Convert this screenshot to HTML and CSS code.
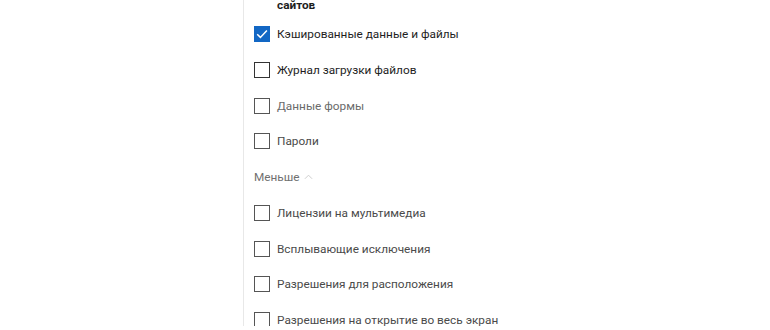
FILE: index.html
```html
<!DOCTYPE html>
<html>
<head>
  <meta charset="UTF-8" />
  <title>Очистить данные браузера</title>
  <link rel="stylesheet" href="styles.css">
</head>
<body>
  <div class="panel">
    <div class="wrap-tail">сайтов</div>

    <label class="option strong">
      <span class="box checked">
        <svg viewBox="0 0 16 16" width="16" height="16"><path d="M3.2 8.3 L6.4 11.4 L12.9 4.6" fill="none" stroke="#fff" stroke-width="1.5"/></svg>
      </span>
      Кэшированные данные и файлы
    </label>
    <label class="option strong">
      <span class="box dark"></span>
      Журнал загрузки файлов
    </label>
    <label class="option faded">
      <span class="box"></span>
      Данные формы
    </label>
    <label class="option">
      <span class="box"></span>
      Пароли
    </label>

    <div class="toggle">
      Меньше
      <svg viewBox="0 0 10 6" width="9" height="6"><path d="M1 5 L5 1 L9 5" fill="none" stroke="#c8c8c8" stroke-width="1"/></svg>
    </div>

    <label class="option">
      <span class="box"></span>
      Лицензии на мультимедиа
    </label>
    <label class="option">
      <span class="box"></span>
      Всплывающие исключения
    </label>
    <label class="option">
      <span class="box"></span>
      Разрешения для расположения
    </label>
    <label class="option">
      <span class="box"></span>
      Разрешения на открытие во весь экран
    </label>
  </div>
</body>
</html>
```

FILE: styles.css
```css
body {
  margin: 0;
  background-color: #fff;
  font-family: Roboto, "Noto Sans", sans-serif;
  font-size: 11.8px;
  color: #4a4a4a;
  overflow: hidden;
}
.panel {
  margin-left: 243px;
  border-left: 1px solid #e8e8e8;
  padding-left: 10px;
  height: 330px;
}
.wrap-tail {
  margin-top: -4px;
  height: 20.25px;
  line-height: 18px;
  padding-left: 23px;
  font-weight: bold;
  color: #1e1e1e;
}
.option, .toggle {
  display: flex;
  align-items: center;
  height: 35.75px;
}
.option.strong {
  color: #1e1e1e;
}
.option.faded {
  color: #6a6a6a;
}
.box {
  width: 14px;
  height: 14px;
  border: 1px solid #555;
  margin-right: 7px;
  flex-shrink: 0;
  display: flex;
  align-items: center;
  justify-content: center;
}
.box.dark {
  border-color: #333;
}
.box.checked {
  background-color: #1267c4;
  border-color: #1267c4;
}
.box.checked svg {
  margin: -1px;
}
.toggle {
  color: #707070;
  gap: 4px;
}
```
